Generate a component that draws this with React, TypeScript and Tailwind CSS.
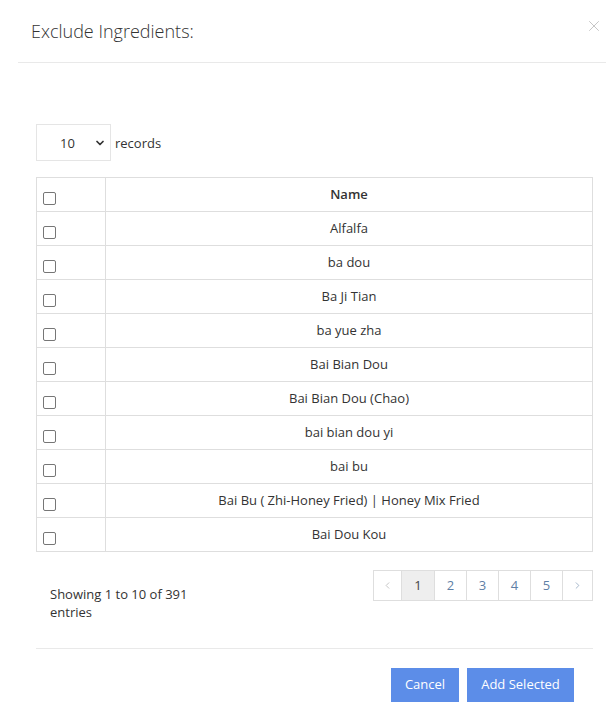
import { ChevronDown, ChevronLeft, ChevronRight, X } from 'lucide-react'

const names = [
  'Alfalfa',
  'ba dou',
  'Ba Ji Tian',
  'ba yue zha',
  'Bai Bian Dou',
  'Bai Bian Dou (Chao)',
  'bai bian dou yi',
  'bai bu',
  'Bai Bu ( Zhi-Honey Fried) | Honey Mix Fried',
  'Bai Dou Kou',
]

function Checkbox() {
  return <span className="block h-[13px] w-[13px] rounded-[2px] border border-[#767676] bg-white" />
}

export default function App() {
  return (
    <div className="min-h-[705px] w-[614px] bg-white font-['Open_Sans',sans-serif] text-[13px] text-[#333]">
      {/* Header */}
      <div className="relative ml-[18px] mr-[8px] flex h-[63px] items-center border-b border-[#e9e9e9] pl-[13px]">
        <h4 className="text-[18px] font-light text-[#333]">Exclude Ingredients:</h4>
        <X className="absolute right-[3px] top-[17px] h-[18px] w-[18px] text-[#c4c4c4]" strokeWidth={1.3} />
      </div>

      {/* Body */}
      <div className="pl-[36px] pr-[21px] pt-[61px]">
        <div className="flex items-center">
          <div className="flex h-[37px] w-[75px] items-center border border-[#e5e5e5] pl-[23px] pr-[4px]">
            <span className="flex-1 pt-[2px]">10</span>
            <ChevronDown className="h-[12px] w-[12px] text-[#333]" strokeWidth={3.5} />
          </div>
          <span className="ml-[4px] pt-[3px]">records</span>
        </div>

        <table className="mt-[16px] w-full border-collapse">
          <thead>
            <tr className="h-[34px]">
              <th className="w-[69px] border border-[#dedede] pl-[6px] pt-[8px] text-left align-middle">
                <Checkbox />
              </th>
              <th className="border border-[#dedede] font-semibold">Name</th>
            </tr>
          </thead>
          <tbody>
            {names.map((n) => (
              <tr key={n} className="h-[34px]">
                <td className="border border-[#dedede] pl-[6px] pt-[8px] align-middle">
                  <Checkbox />
                </td>
                <td className="border border-[#dedede] text-center">{n}</td>
              </tr>
            ))}
          </tbody>
        </table>

        {/* Footer of table */}
        <div className="mt-[18px] flex items-start justify-between">
          <div className="mt-[15px] w-[160px] pl-[14px] leading-[18px]">Showing 1 to 10 of 391 entries</div>
          <div className="flex h-[31px] border border-[#dedede]">
            <span className="flex w-[28px] items-center justify-center border-r border-[#dedede] text-[#aaaaaa]">
              <ChevronLeft className="h-[11px] w-[11px]" strokeWidth={1.5} />
            </span>
            <span className="flex w-[33px] items-center justify-center border-r border-[#dedede] bg-[#eeeeee] text-[#444]">1</span>
            {[2, 3, 4, 5].map((p) => (
              <span key={p} className="flex w-[32px] items-center justify-center border-r border-[#dedede] text-[#5f7fa6]">
                {p}
              </span>
            ))}
            <span className="flex w-[29px] items-center justify-center text-[#7f97b5]">
              <ChevronRight className="h-[11px] w-[11px]" strokeWidth={1.5} />
            </span>
          </div>
        </div>

        <div className="mt-[27px] flex justify-end gap-[8px] border-t border-[#e9e9e9] pr-[19px] pt-[19px]">
          <button className="h-[34px] w-[68px] bg-[#5c8de8] text-[13px] text-white">Cancel</button>
          <button className="h-[34px] w-[107px] bg-[#5c8de8] text-[13px] text-white">Add Selected</button>
        </div>
      </div>
    </div>
  )
}
